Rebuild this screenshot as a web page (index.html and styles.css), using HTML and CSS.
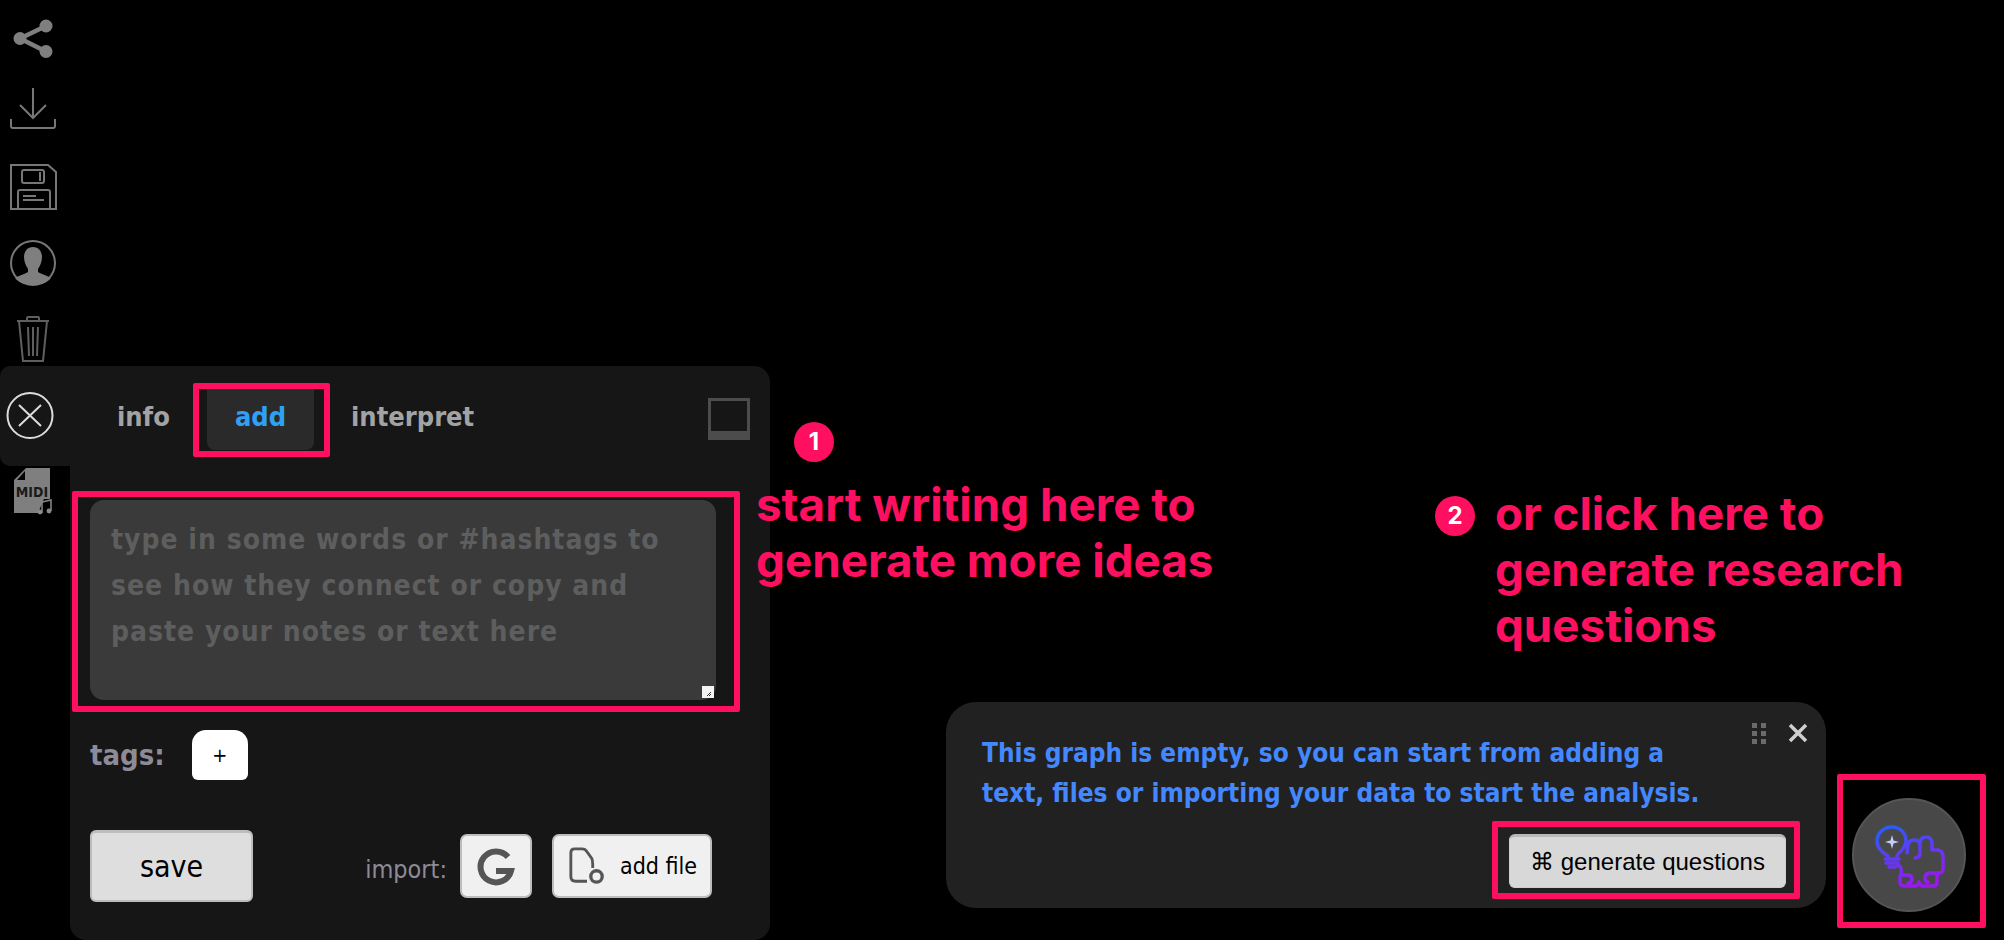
FILE: index.html
```html
<!DOCTYPE html>
<html lang="en">
<head>
<meta charset="utf-8">
<title>Graph editor</title>
<link rel="stylesheet" href="styles.css">
</head>
<body>
<div class="page">
  <nav class="rail">
    <div class="rail-cell">
      <svg class="rail-icon" viewBox="0 0 70 74"><g class="i-solid"><circle cx="46" cy="26" r="6.5"/><circle cx="20" cy="38.5" r="6.5"/><circle cx="46" cy="51.5" r="6.5"/></g><path class="i-bar" d="M46 26 20 38.5 46 51.5"/></svg>
    </div>
    <div class="rail-cell">
      <svg class="rail-icon" viewBox="0 0 70 74"><path class="i-line" d="M33 14V44M20 31 33 44 46 31M11 45V52Q11 54 13 54H53Q55 54 55 52V45"/></svg>
    </div>
    <div class="rail-cell">
      <svg class="rail-icon" viewBox="0 0 70 74"><path class="i-line" d="M11 17H48L56 24V61H11Z"/><rect class="i-line" x="22" y="22" width="22" height="13" rx="2"/><path class="i-line" d="M40 24V33"/><path class="i-line" d="M18 61V44Q18 42 20 42H48Q50 42 50 44V61M23 48H36M23 52H44"/></svg>
    </div>
    <div class="rail-cell">
      <svg class="rail-icon" viewBox="0 0 70 74"><circle class="i-line" cx="33" cy="41" r="22"/><path class="i-solid" d="M33 25C27 25 24 30 24 35 24 40 26 44 28 47V50C25 52 18 54 15 56 19 61 26 63 33 63 40 63 47 61 51 56 48 54 41 52 38 50V47C40 44 42 40 42 35 42 30 39 25 33 25Z"/></svg>
    </div>
    <div class="rail-cell rail-cell--last">
      <svg class="rail-icon rail-icon--short" viewBox="0 0 70 70"><path class="i-dim" d="M17 25H49M27 25V22Q27 21 28 21H38Q39 21 39 22V25M19 25 23 65H43L47 25M28 31 29 60M33 31V60M38 31 37 60"/></svg>
    </div>
    <div class="rail-close">
      <svg class="close-icon" viewBox="0 0 70 100"><circle cx="30" cy="49.5" r="22.5"/><path d="M19 39 41 60M41 39 19 60"/></svg>
    </div>
    <div class="rail-midi">
      <svg class="midi-icon" viewBox="0 0 70 60"><path class="i-solid" d="M26 2H50V33H44L38 47H14V14Z"/><path class="midi-fold" d="M17 14 25 5V14Z"/><text class="midi-text" x="32" y="31" text-anchor="middle">MIDI</text><path class="midi-note" d="M42 47V36L51 34V45"/><circle class="midi-dot" cx="40" cy="46" r="2.400"/><circle class="midi-dot" cx="49" cy="45" r="2.400"/></svg>
    </div>
  </nav>

  <section class="panel">
    <div class="tabs">
      <div class="tab">info</div>
      <div class="tab tab--active mark mark--tab">add</div>
      <div class="tab">interpret</div>
      <div class="dock"></div>
    </div>
    <div class="editor mark mark--editor">type in some words or #hashtags to see how they connect or copy and paste your notes or text here
      <span class="grip"><svg viewBox="0 0 12 12"><path d="M5 10 9 6M7 10 9 8"/></svg></span>
    </div>
    <div class="tags">
      <span class="tags-label">tags:</span>
      <button class="tag-add">+</button>
    </div>
    <div class="actions">
      <button class="save">save</button>
      <div class="import">
        <span class="import-label">import:</span>
        <button class="imp imp--g"><svg viewBox="0 0 40 40"><path d="M32 11A15.500 15.500 0 1 0 35 25H20"/></svg></button>
        <button class="imp imp--file"><svg viewBox="0 0 40 40"><path d="M20 36H8Q3 36 3 31V6Q3 2 7 2H15Q18 2 20 5L25 12Q26 14 26 18V22"/><circle class="imp-dot" cx="30" cy="31" r="6"/></svg>add file</button>
      </div>
    </div>
  </section>

  <aside class="side">
    <div class="hint">
      <button class="hint-close"><svg viewBox="0 0 20 20"><path d="M2 2 18 18M18 2 2 18"/></svg></button>
      <span class="drag"><i></i><i></i><i></i><i></i><i></i><i></i></span>
      <p class="hint-text">This graph is empty, so you can start from adding a<br>text, files or importing your data to start the analysis.</p>
      <div class="hint-foot"><button class="gen mark mark--gen">⌘ generate questions</button></div>
    </div>
    <button class="fab mark mark--fab">
      <svg viewBox="0 0 114 114">
        <defs>
          <linearGradient id="glow" gradientUnits="userSpaceOnUse" x1="40" y1="28" x2="60" y2="90"><stop offset="0" stop-color="#2b5cf5"/><stop offset="1" stop-color="#9a18ee"/></linearGradient>
          <linearGradient id="spark" x1="0" y1="0" x2="1" y2="1"><stop offset="0" stop-color="#a9e6ff"/><stop offset="1" stop-color="#e2b4f5"/></linearGradient>
        </defs>
        <g class="brain">
          <path d="M36 58C30 54 25 50 25 43 25 35 32 29 40 29 48 29 54 35 54 43 54 45 53 47 52 49 50 53 46 55 45 58"/>
          <path d="M33 61H47M34 65H46M37 69H43"/>
          <path d="M45 68H48C50 72 50 75 48 78V84Q48 88 53 88H62Q66 88 67 84 68 88 72 88H81Q85 88 85 84V75H88Q91 74 91 71V59Q91 53 86 52H80V46Q80 39 74 39 68 39 68 46V56Q68 59 63 60M68 46Q67 42 62 42 57 42 56 47L55 55"/>
          <path d="M49 77H56Q60 77 60 81 60 85 56 85M84 75H77Q73 76 73 80 73 84 76 84"/>
        </g>
        <path class="sparkle" d="M40 37 41.500 42.500 47 44 41.500 45.500 40 51 38.500 45.500 33 44 38.500 42.500Z"/>
      </svg>
    </button>
  </aside>

  <div class="note note--one">
    <span class="badge badge--one">1</span>
    start writing here to<br>generate more ideas
  </div>
  <div class="note note--two">
    <span class="badge badge--two">2</span>
    or click here to<br>generate research<br>questions
  </div>
</div>
</body>
</html>
```

FILE: styles.css
```css
* { box-sizing: border-box; }
html, body { margin: 0; height: 100%; background: #000; }
body { font-family: "DejaVu Sans Condensed", "DejaVu Sans", sans-serif; font-stretch: condensed; overflow: hidden; }
button { font: inherit; cursor: pointer; padding: 0; }

.page { position: relative; display: flex; width: 2004px; height: 940px; background: #000; }

/* left rail */
.rail { width: 70px; flex: none; display: flex; flex-direction: column; }
.rail-cell { height: 74px; }
.rail-cell--last { height: 70px; }
.rail-icon { display: block; width: 70px; height: 74px; }
.rail-icon--short { height: 70px; }
.i-solid { fill: #7f7f7f; }
.i-bar { fill: none; stroke: #7f7f7f; stroke-width: 4.500; }
.i-line { fill: none; stroke: #777; stroke-width: 2; }
.i-dim { fill: none; stroke: #5f5f5f; stroke-width: 2; }
.rail-close { height: 100px; background: #161616; border-radius: 10px 0 0 10px; }
.close-icon { display: block; width: 70px; height: 100px; fill: none; stroke: #dcdcdc; stroke-width: 2; }
.rail-midi { height: 60px; }
.midi-icon { display: block; width: 70px; height: 60px; }
.midi-fold { fill: #000; }
.midi-text { font-size: 14px; font-weight: 700; fill: #1a1a1a; }
.midi-note { fill: none; stroke: #8a8a8a; stroke-width: 1.500; }
.midi-dot { fill: #8a8a8a; }

/* panel */
.panel { width: 700px; height: 574px; margin-top: 366px; flex: none; background: #161616; border-radius: 0 16px 16px 16px; padding: 23px 20px 0 19px; display: flex; flex-direction: column; }
.tabs { display: flex; gap: 9px; height: 61px; }
.tab { padding: 0 28px; height: 61px; line-height: 55px; font-size: 27px; font-weight: 700; color: #a3a3a3; border-radius: 0 0 8px 8px; }
.tab--active { background: #2a2a2a; color: #30a0f5; }
.dock { margin: 9px 0 0 auto; width: 42px; height: 42px; border: 3px solid #4c4c4c; border-bottom-width: 9px; }

.mark { position: relative; }
.mark::after { content: ""; position: absolute; border: 6px solid #ff0f5f; border-radius: 2px; pointer-events: none; }
.mark--tab::after { inset: -6px -16px -7px -14px; }
.mark--editor::after { inset: -9px -24px -12px -18px; }
.mark--gen::after { inset: -16px -15px -12px -18px; }
.mark--fab::after { inset: -26px -22px -18px -17px; }

.editor { margin: 50px 0 0 1px; width: 626px; height: 200px; padding: 17px 21px; background: #3a3a3a; border-radius: 14px; color: #5e5e5e; font-size: 28px; line-height: 46px; font-weight: 700; letter-spacing: 1px; }
.grip { position: absolute; right: 2px; bottom: 2px; width: 12px; height: 12px; background: #f4f4f4; }
.grip svg { display: block; width: 12px; height: 12px; fill: none; stroke: #333; stroke-width: 1; }

.tags { margin: 30px 0 0 1px; height: 50px; display: flex; align-items: center; gap: 27px; }
.tags-label { font-size: 29px; font-weight: 700; color: #8d8b98; }
.tag-add { width: 56px; height: 50px; border: 0; border-radius: 14px 14px 6px 6px; background: #fff; color: #000; font-size: 20px; }

.actions { margin: 50px 0 0 1px; display: flex; align-items: center; width: 622px; }
.save { width: 163px; height: 72px; background: #dedede; border: 2px solid #bdbdbd; border-top-width: 3px; border-radius: 6px; color: #000; font-size: 30px; }
.import { margin-left: auto; display: flex; align-items: center; }
.import-label { font-size: 25px; color: #8d8b98; margin: 6px 13px 0 0; }
.imp { height: 64px; background: #f0f0f0; border: 2px solid #bdbdbd; border-radius: 7px; color: #000; display: flex; align-items: center; }
.imp--g { width: 72px; justify-content: center; }
.imp--g svg { width: 40px; height: 40px; fill: none; stroke: #555; stroke-width: 6; }
.imp--file { width: 160px; margin-left: 20px; padding-left: 14px; font-size: 23px; gap: 14px; white-space: nowrap; }
.imp--file svg { width: 38px; height: 38px; fill: none; stroke: #555; stroke-width: 3; flex: none; }
.imp-dot { stroke-width: 3.500; }

/* right side */
.side { flex: 1; display: flex; align-items: flex-end; padding: 0 38px 28px 176px; gap: 26px; }
.hint { position: relative; width: 880px; height: 206px; margin-bottom: 4px; flex: none; background: #212121; border-radius: 30px; padding: 31px 40px 0 36px; }
.hint-text { margin: 0; color: #4488ff; font-size: 26px; line-height: 40px; font-weight: 700; white-space: nowrap; }
.hint-foot { margin-top: 21px; display: flex; justify-content: flex-end; }
.hint-close { position: absolute; top: 21px; right: 18px; width: 20px; height: 20px; border: 0; background: none; }
.hint-close svg { display: block; width: 20px; height: 20px; fill: none; stroke: #cfcfcf; stroke-width: 3.500; }
.drag { position: absolute; top: 21px; right: 60px; display: grid; grid-template-columns: 5px 5px; gap: 3px 4px; }
.drag i { width: 5px; height: 5px; background: #6a6a6a; }
.gen { width: 277px; height: 54px; background: #d8d8d8; border: 1px solid #cfcfcf; border-top: 3px solid #b8b8b8; border-radius: 6px; font-family: "Liberation Sans", Arial, sans-serif; font-size: 24px; color: #000; white-space: nowrap; font-stretch: normal; }
.fab { width: 114px; height: 114px; flex: none; border-radius: 50%; background: #484848; border: 2px solid #555; }
.fab svg { position: absolute; inset: -2px; width: 114px; height: 114px; display: block; }
.brain { fill: none; stroke: url(#glow); stroke-width: 3.500; stroke-linecap: round; stroke-linejoin: round; }
.sparkle { fill: url(#spark); }

/* annotations */
.note { position: absolute; font-family: Inter, sans-serif; font-stretch: normal; font-weight: 700; font-size: 45.75px; line-height: 56px; color: #ff0f5f; white-space: nowrap; }
.note--one { left: 756px; top: 477px; }
.note--two { left: 1495px; top: 486px; }
.badge { position: absolute; width: 40px; height: 40px; border-radius: 50%; background: #ff0f5f; color: #fff; font-size: 24px; font-weight: 700; line-height: 40px; text-align: center; }
.badge--one { left: 38px; top: -55px; }
.badge--two { left: -60px; top: 10px; }
```
